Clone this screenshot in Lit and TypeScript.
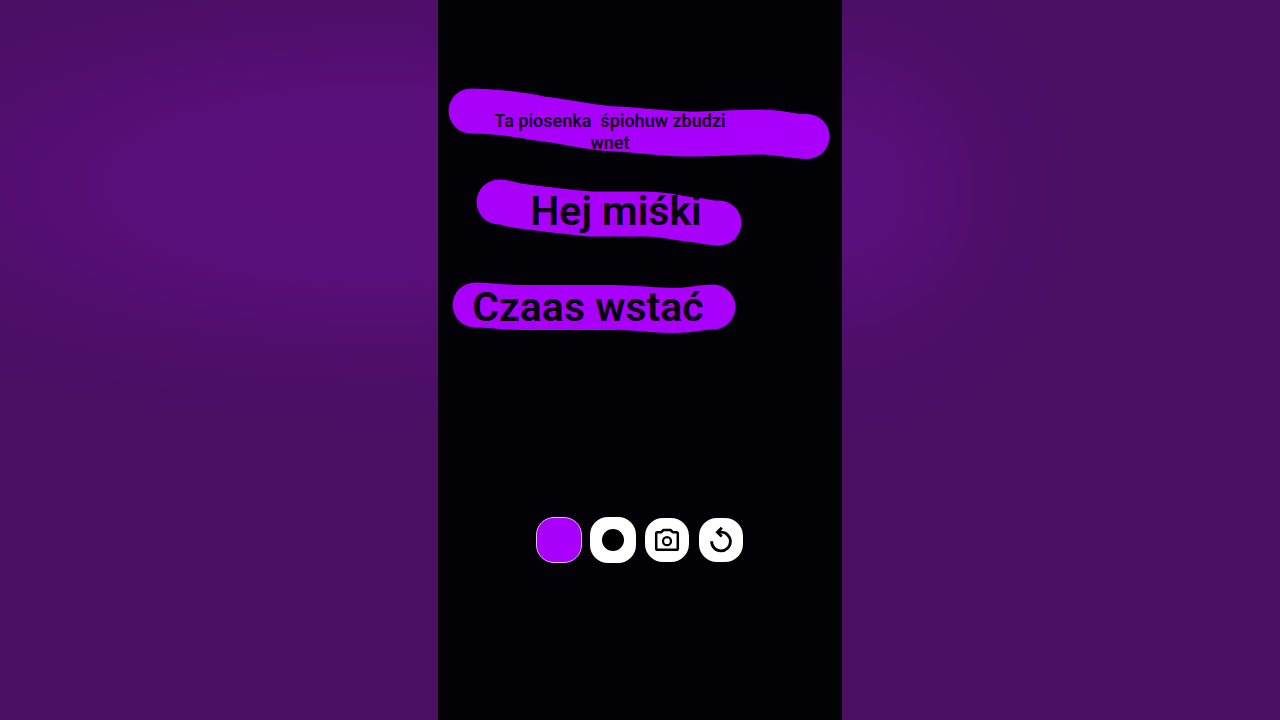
import { LitElement, html, css } from "lit";
import { customElement, state } from "lit/decorators.js";

@customElement("app-root")
export class AppRoot extends LitElement {
  @state() private cleared = false;

  static styles = css`
    :host {
      display: grid;
      grid-template-columns: 1fr minmax(0, 404px) 1fr;
      min-height: 100vh;
      background: #4a0e63;
      font-family: Roboto, "Noto Sans", sans-serif;
      font-weight: 600;
    }
    .glow-left {
      background: radial-gradient(
        ellipse 640px 240px at 85% 186px,
        #5b0f7c 0%,
        #590f7a 36%,
        #510e6d 64%,
        #4a0e63 100%
      );
    }
    .glow-right {
      background: radial-gradient(
        ellipse 240px 250px at 0 190px,
        #5a0f7c 0%,
        #580f79 24%,
        #4f0e6a 62%,
        #4a0e63 100%
      );
    }
    .stage {
      position: relative;
      display: flex;
      flex-direction: column;
      align-items: center;
      background: #020105;
    }
    .drawing {
      display: block;
      width: 100%;
      height: auto;
      fill: none;
      stroke: #a900fb;
      stroke-width: 45;
      stroke-linecap: round;
      stroke-linejoin: round;
    }
    .label {
      position: absolute;
      margin: 0;
      text-align: center;
      white-space: pre-wrap;
      color: #07000c;
      font-size: 41px;
      line-height: 48px;
    }
    .song {
      left: 44px;
      top: 110px;
      width: 256px;
      color: #14001f;
      font-size: 18px;
      line-height: 22px;
    }
    .hello {
      left: 78px;
      top: 187px;
      width: 200px;
    }
    .wake {
      left: 20px;
      top: 283px;
      width: 260px;
    }
    .tools {
      display: grid;
      grid-template-columns: repeat(4, 46px);
      gap: 8px;
      padding-bottom: 157px;
    }
    .tool {
      display: grid;
      place-items: center;
      box-sizing: border-box;
      width: 46px;
      height: 46px;
      padding: 0;
      border: 0;
      border-radius: 18px;
      background: #fff;
      color: #000;
      cursor: pointer;
    }
    .swatch {
      border: 1px solid #e3b5f5;
      background: #a900fb;
    }
    .compact {
      width: 44px;
      height: 44px;
      margin: 1px;
    }
    .icon {
      display: block;
      width: 30px;
      height: 30px;
      fill: none;
      stroke: currentColor;
    }
  `;

  render() {
    return html`
      <div class="glow-left"></div>
      <main class="stage">
        <svg class="drawing" viewBox="0 0 404 517" aria-hidden="true">
          ${this.cleared
            ? null
            : html`<svg>
                <path d="M33 111C55 111 85 115 102 118.500C125 121 145 126 170 128.500C205 130 225 134 252 134C282 134 295 132 322 132C342 132 352 136.500 369 136.500" />
                <path d="M61 202C68 202 74 205 82 206C105 209 130 212 152 214H208C228 214 242 219 258 220C268 222 275 223 281 223" />
                <path d="M37 305C50 305 62 307 80 307.500H172C195 307 215 310.500 237 310.500C255 310.500 262 307 275 307" />
              </svg>`}
        </svg>
        <p class="label song">Ta piosenka  śpiohuw zbudzi wnet</p>
        <p class="label hello">Hej miśki</p>
        <p class="label wake">Czaas wstać</p>
        <div class="tools" role="toolbar" aria-label="Drawing tools">
          <button class="tool swatch" aria-label="Colour"></button>
          <button class="tool" aria-label="Brush size">
            <svg class="icon" viewBox="0 0 30 30">
              <circle cx="15" cy="15" r="11" fill="currentColor" stroke="none" />
            </svg>
          </button>
          <button class="tool compact" aria-label="Take photo">
            <svg class="icon" viewBox="0 0 30 30" stroke-width="2.500" stroke-linejoin="round">
              <path d="M5.500 7.200H9.300L11.500 5H18.500L20.700 7.200H24.500Q25.800 7.200 25.800 8.500V23.500Q25.800 24.800 24.500 24.800H5.500Q4.200 24.800 4.200 23.500V8.500Q4.200 7.200 5.500 7.200Z" />
              <circle cx="15" cy="16.200" r="4" stroke-width="2.300" />
            </svg>
          </button>
          <button class="tool compact" aria-label="Clear" @click=${() => (this.cleared = true)}>
            <svg class="icon" viewBox="0 0 30 30" stroke-width="2.800">
              <path d="M5.600 16.200A9.400 9.400 0 1 0 15 7.100H12" />
              <path d="M15.800 2.800L11.400 7.200L15.800 11.600" />
            </svg>
          </button>
        </div>
      </main>
      <div class="glow-right"></div>
    `;
  }
}
